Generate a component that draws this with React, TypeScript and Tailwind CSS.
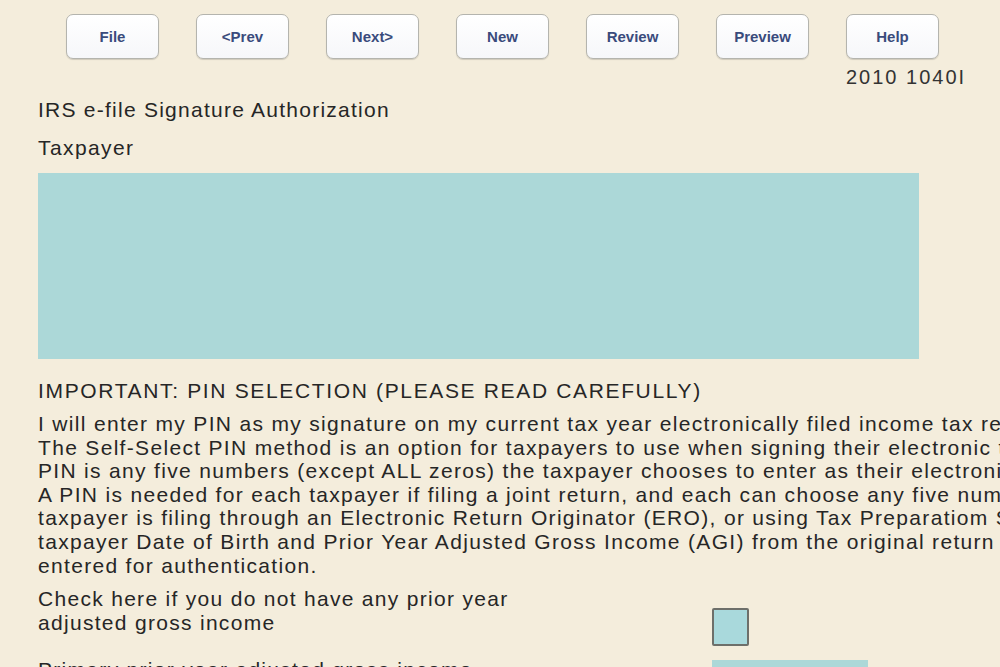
import React from "react";

const buttons = ["File", "<Prev", "Next>", "New", "Review", "Preview", "Help"];

const para = [
  "I will enter my PIN as my signature on my current tax year electronically filed income tax return.",
  "The Self-Select PIN method is an option for taxpayers to use when signing their electronic tax return. The",
  "PIN is any five numbers (except ALL zeros) the taxpayer chooses to enter as their electronic signature.",
  "A PIN is needed for each taxpayer if filing a joint return, and each can choose any five numbers. If the",
  "taxpayer is filing through an Electronic Return Originator (ERO), or using Tax Preparatiom Software, the",
  "taxpayer Date of Birth and Prior Year Adjusted Gross Income (AGI) from the original return must be",
  "entered for authentication.",
];

export default function App() {
  return (
    <div
      className="w-[1000px] h-[667px] overflow-hidden bg-[#f4eddc] text-[#262626]"
      style={{ fontFamily: '"Liberation Sans", Arial, sans-serif' }}
    >
      <div className="flex gap-[37px] pl-[66px] pt-[14px]">
        {buttons.map((b) => (
          <div
            key={b}
            className="w-[93px] h-[45px] flex items-center justify-center pt-[2px] rounded-[7px] border-[1.5px] border-[#b4b4ae] bg-gradient-to-b from-white to-[#f6f7fa] text-[15px] font-bold text-[#3a4b7c] shadow-[0_1px_1px_rgba(0,0,0,0.15)]"
          >
            {b}
          </div>
        ))}
      </div>
      <div className="pl-[846px] pt-[7px] text-[20px] leading-[22px] tracking-[2px] text-[#333]">2010 1040I</div>
      <div className="pl-[38px] pt-[9px] text-[21px] leading-[26px] tracking-[1.25px]">IRS e-file Signature Authorization</div>
      <div className="pl-[38px] pt-[12px] text-[21px] leading-[26px] tracking-[1.4px]">Taxpayer</div>
      <div className="ml-[38px] mt-[12px] w-[881px] h-[186px] bg-[#acd8d8]" />
      <div className="pl-[38px] pt-[19px] text-[21px] leading-[26px] tracking-[1.65px] whitespace-nowrap">
        IMPORTANT: PIN SELECTION (PLEASE READ CAREFULLY)
      </div>
      <div className="pl-[38px] pt-[8px] text-[21px] leading-[23.6px] tracking-[1.32px] whitespace-nowrap">
        {para.map((l) => (
          <div key={l}>{l}</div>
        ))}
      </div>
      <div className="flex pl-[38px] pt-[10px]">
        <div className="w-[674px] text-[21px] leading-[23.5px] tracking-[1.3px] whitespace-nowrap">
          <div>Check here if you do not have any prior year</div>
          <div>adjusted gross income</div>
        </div>
        <div className="pt-[21px]">
          <div className="w-[37px] h-[38px] bg-[#a9d9dc] border-2 border-[#6d6f6a] rounded-[2px]" />
        </div>
      </div>
      <div className="flex pl-[38px] pt-[14px]">
        <div className="w-[674px] -mt-[2px] text-[21px] leading-[23.5px] tracking-[1.3px] whitespace-nowrap">
          Primary prior year adjusted gross income
        </div>
        <div className="w-[156px] h-[36px] bg-[#acd8d8]" />
      </div>
    </div>
  );
}
